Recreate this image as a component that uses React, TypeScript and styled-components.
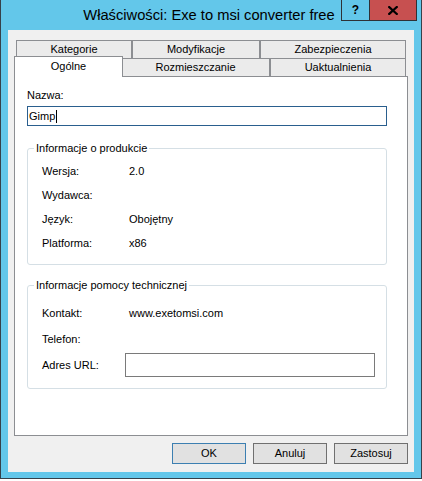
import React from 'react';
import styled, { createGlobalStyle } from 'styled-components';

const GlobalStyle = createGlobalStyle`
  html, body { margin: 0; padding: 0; background: #ffffff; }
  body {
    font-family: "Liberation Sans", Arial, sans-serif;
    font-size: 11px;
    color: #000;
  }
  * { box-sizing: border-box; }
`;

const Window = styled.div`
  width: 422px;
  height: 479px;
  background: #63c7ea;
  border: 1px solid #36414a;
  border-top: none;
  padding: 0 7px 6px 7px;
  display: flex;
  flex-direction: column;
`;

const TitleBar = styled.div`
  height: 30px;
  margin: 0 -7px;
  padding-right: 4px;
  display: grid;
  grid-template-columns: 1fr auto 1fr;
  align-items: start;
`;

const Title = styled.div`
  grid-column: 2;
  font-family: "Liberation Sans", Arial, sans-serif;
  font-size: 14.7px;
  line-height: 30px;
  color: #000;
  white-space: nowrap;
`;

const CaptionGroup = styled.div`
  grid-column: 3;
  justify-self: end;
  display: flex;
  height: 21px;
  border: 1px solid #2e3236;
  border-top: none;
`;

const CaptionButton = styled.div<{ $w: number; $bg: string; $divider?: boolean }>`
  width: ${p => p.$w}px;
  height: 100%;
  background: ${p => p.$bg};
  border-right: ${p => (p.$divider ? '1px solid #2e3236' : 'none')};
  display: flex;
  align-items: center;
  justify-content: center;
  font-family: "Liberation Sans", Arial, sans-serif;
  font-weight: bold;
  font-size: 12px;
  color: #000;
`;

const Client = styled.div`
  flex: 1;
  background: #f0f0f0;
  padding: 10px 6px 8px 6px;
  display: flex;
  flex-direction: column;
`;

const TabStrip = styled.div`
  display: flex;
  flex-direction: column;
  padding-left: 2px;
`;

const TabRow = styled.div`
  display: flex;
  height: 18px;
`;

const Tab = styled.div<{ $w: number; $active?: boolean }>`
  width: ${p => p.$w + (p.$active ? 4 : 0)}px;
  flex: none;
  height: ${p => (p.$active ? 21 : 18)}px;
  margin: ${p => (p.$active ? '-2px -2px 0 -2px' : '0')};
  position: relative;
  z-index: ${p => (p.$active ? 2 : 0)};
  background: ${p => (p.$active ? '#ffffff' : '#ebebeb')};
  border: 1px solid #8c8e92;
  border-bottom: none;
  display: flex;
  align-items: center;
  justify-content: center;
  padding-bottom: ${p => (p.$active ? 2 : 0)}px;
  line-height: 13px;
  white-space: nowrap;
`;

const Panel = styled.div`
  height: 360px;
  background: #ffffff;
  border: 1px solid #8c8e92;
  padding: 12px 20px 0 12px;
  display: flex;
  flex-direction: column;
`;

const FieldLabel = styled.div`
  line-height: 13px;
  margin-bottom: 4px;
`;

const TextBox = styled.div<{ $focused?: boolean; $w?: number; $h: number }>`
  width: ${p => (p.$w ? `${p.$w}px` : '100%')};
  height: ${p => p.$h}px;
  background: #ffffff;
  border: 1px solid ${p => (p.$focused ? '#2a5f8e' : '#7a7a7a')};
  padding-left: 1px;
  display: flex;
  align-items: center;
  line-height: 13px;
`;

const Caret = styled.span`
  display: inline-block;
  width: 1px;
  height: 13px;
  background: #000;
  margin-left: 1px;
`;

const Group = styled.fieldset<{ $mt: number; $pt: number; $pb: number }>`
  margin: ${p => p.$mt}px 0 0 0;
  padding: ${p => p.$pt}px 11px ${p => p.$pb}px 14px;
  border: 1px solid #d5dfe5;
  border-radius: 3px;
  min-width: 0;
`;

const Legend = styled.legend`
  padding: 0 2px;
  margin-left: -8px;
  line-height: 12px;
  color: #000;
`;

const InfoGrid = styled.div<{ $row: number }>`
  display: grid;
  grid-template-columns: 83px 250px;
  grid-auto-rows: ${p => p.$row}px;
  align-items: center;
`;

const InfoLabel = styled.div`
  line-height: 13px;
`;

const InfoValue = styled.div`
  padding-left: 4px;
  line-height: 13px;
`;

const ButtonRow = styled.div`
  margin-top: 7px;
  display: flex;
  justify-content: flex-end;
  gap: 7px;
`;

const DialogButton = styled.div<{ $default?: boolean }>`
  width: 74px;
  height: 21px;
  background: #e1e1e1;
  border: 1px solid ${p => (p.$default ? '#3c7fb1' : '#707070')};
  display: flex;
  align-items: center;
  justify-content: center;
  line-height: 13px;
`;

const CloseGlyph = () => (
  <svg width="10" height="9" viewBox="0 0 10 9">
    <path d="M1.2 1 L8.8 8 M8.8 1 L1.2 8" stroke="#000" strokeWidth="2.2" strokeLinecap="square" />
  </svg>
);

export default function App() {
  return (
    <>
      <GlobalStyle />
      <Window>
        <TitleBar>
          <Title>Właściwości: Exe to msi converter free</Title>
          <CaptionGroup>
            <CaptionButton $w={28} $bg="#63c7ea" $divider>?</CaptionButton>
            <CaptionButton $w={46} $bg="#c75050"><CloseGlyph /></CaptionButton>
          </CaptionGroup>
        </TitleBar>
        <Client>
          <TabStrip>
            <TabRow>
              <Tab $w={116}>Kategorie</Tab>
              <Tab $w={128}>Modyfikacje</Tab>
              <Tab $w={146}>Zabezpieczenia</Tab>
            </TabRow>
            <TabRow>
              <Tab $w={105} $active>Ogólne</Tab>
              <Tab $w={149}>Rozmieszczanie</Tab>
              <Tab $w={136}>Uaktualnienia</Tab>
            </TabRow>
          </TabStrip>
          <Panel>
            <FieldLabel>Nazwa:</FieldLabel>
            <TextBox $focused $h={20}>
              Gimp<Caret />
            </TextBox>
            <Group $mt={16} $pt={5} $pb={9}>
              <Legend>Informacje o produkcie</Legend>
              <InfoGrid $row={24}>
                <InfoLabel>Wersja:</InfoLabel>
                <InfoValue>2.0</InfoValue>
                <InfoLabel>Wydawca:</InfoLabel>
                <InfoValue></InfoValue>
                <InfoLabel>Język:</InfoLabel>
                <InfoValue>Obojętny</InfoValue>
                <InfoLabel>Platforma:</InfoLabel>
                <InfoValue>x86</InfoValue>
              </InfoGrid>
            </Group>
            <Group $mt={14} $pt={9} $pb={10}>
              <Legend>Informacje pomocy technicznej</Legend>
              <InfoGrid $row={26}>
                <InfoLabel>Kontakt:</InfoLabel>
                <InfoValue>www.exetomsi.com</InfoValue>
                <InfoLabel>Telefon:</InfoLabel>
                <InfoValue></InfoValue>
                <InfoLabel>Adres URL:</InfoLabel>
                <TextBox $w={250} $h={24} />
              </InfoGrid>
            </Group>
          </Panel>
          <ButtonRow>
            <DialogButton $default>OK</DialogButton>
            <DialogButton>Anuluj</DialogButton>
            <DialogButton>Zastosuj</DialogButton>
          </ButtonRow>
        </Client>
      </Window>
    </>
  );
}
